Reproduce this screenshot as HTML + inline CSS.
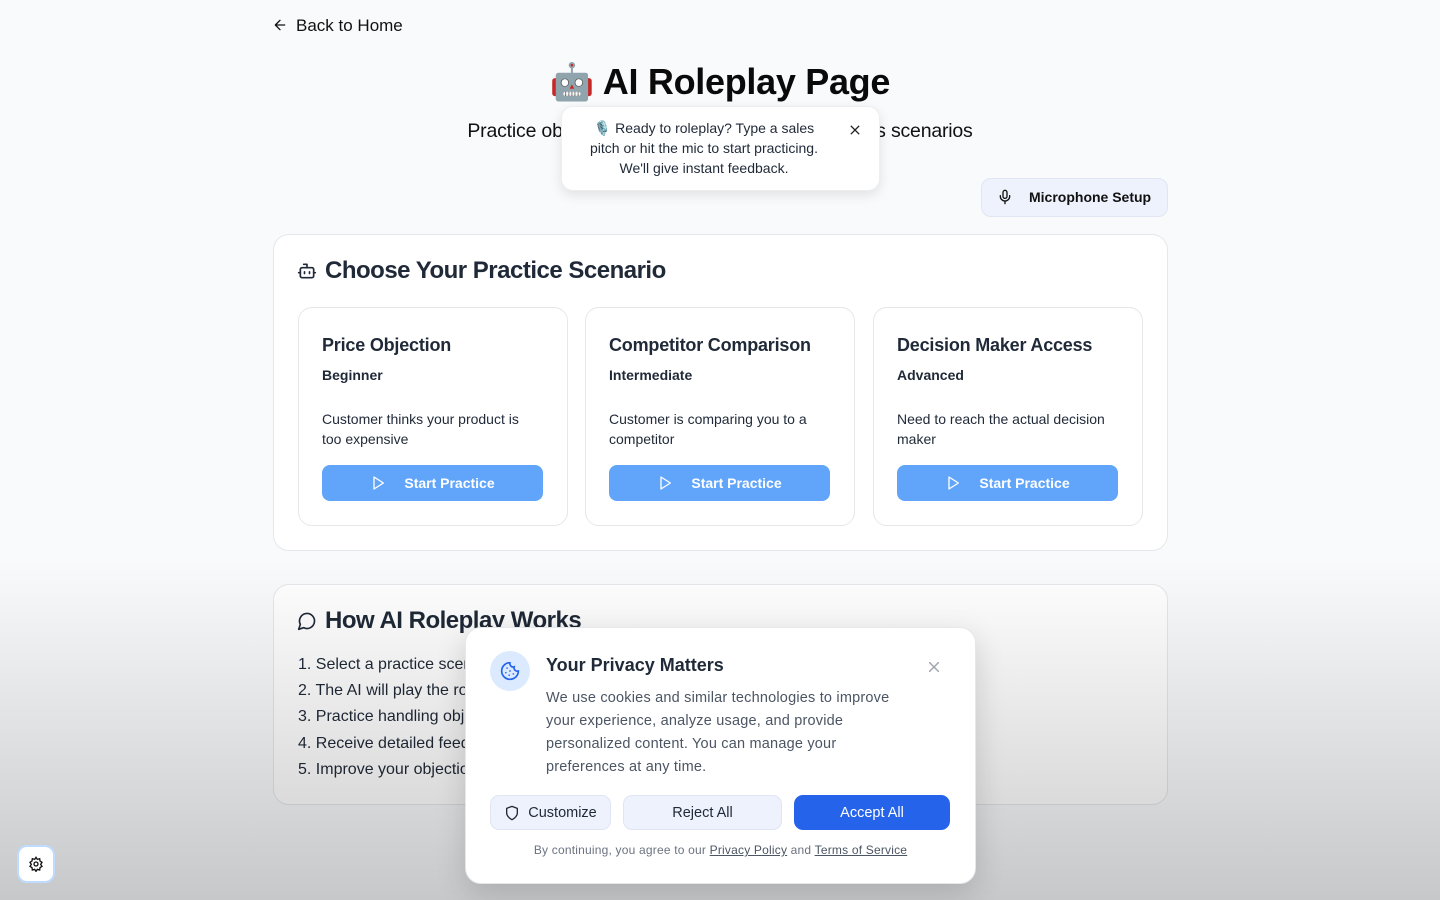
<!DOCTYPE html>
<html><head><meta charset="utf-8"><style>
*{box-sizing:border-box;margin:0;padding:0}
body{width:1440px;height:900px;overflow:hidden;background:#f8fafc;font-family:"Liberation Sans",sans-serif;color:#111827;position:relative}
.a{position:absolute}
.card{position:absolute;background:#fff;border:1px solid #e5e7eb;border-radius:16px}
.sc{position:absolute;top:307px;width:270px;height:219px;background:#fff;border:1px solid #e5e7eb;border-radius:14px}
.sc h3{position:absolute;left:23px;top:27px;font-size:18px;font-weight:bold;color:#1f2937;letter-spacing:-0.2px}
.sc .lv{position:absolute;left:23px;top:59px;font-size:14px;font-weight:bold;color:#1f2937}
.sc .d{position:absolute;left:23px;top:101px;width:215px;font-size:14px;line-height:20px;color:#1f2937}
.sc .b{position:absolute;left:23px;top:157px;width:221px;height:36px;background:#60a5fa;border-radius:8px;color:#fff;font-size:14px;font-weight:bold;display:flex;align-items:center;justify-content:center;gap:18px}
.li{position:absolute;left:298px;font-size:16px;color:#1f2937}
.btn{position:absolute;top:795px;height:35px;border-radius:9px;font-size:14.5px;display:flex;align-items:center;justify-content:center}
</style></head><body>
<svg class="a" style="left:272px;top:17px" width="16" height="16" viewBox="0 0 24 24" fill="none" stroke="#111" stroke-width="2" stroke-linecap="round" stroke-linejoin="round"><path d="M19 12H5M12 19l-7-7 7-7"/></svg>
<div class="a" style="left:296px;top:16px;font-size:17px;color:#111">Back to Home</div>
<div class="a" style="left:0;width:1440px;top:61px;text-align:center;font-size:36px;font-weight:bold;color:#0a0a0a;letter-spacing:-0.3px">🤖 AI Roleplay Page</div>
<div class="a" style="left:0;width:1440px;top:120px;text-align:center;font-size:19.5px;color:#111;letter-spacing:-0.2px">Practice objection handling with AI-powered sales scenarios</div>

<div class="a" style="left:981px;top:178px;width:187px;height:39px;background:#eef2fd;border:1px solid #dfe5f3;border-radius:10px"></div>
<svg class="a" style="left:997px;top:189px" width="16" height="16" viewBox="0 0 24 24" fill="none" stroke="#111" stroke-width="2" stroke-linecap="round"><rect x="9" y="2" width="6" height="12" rx="3"/><path d="M19 10v1a7 7 0 0 1-14 0v-1M12 18v4"/></svg>
<div class="a" style="left:1029px;top:189px;font-size:14px;font-weight:bold;color:#111">Microphone Setup</div>

<div class="card" style="left:273px;top:234px;width:895px;height:317px"></div>
<svg class="a" style="left:297px;top:261px" width="20" height="20" viewBox="0 0 24 24" fill="none" stroke="#1f2937" stroke-width="2" stroke-linecap="round" stroke-linejoin="round"><path d="M12 8V4H8"/><rect x="4" y="8" width="16" height="12" rx="2"/><path d="M2 14h2M20 14h2M15 13v2M9 13v2"/></svg>
<div class="a" style="left:325px;top:257px;font-size:24px;font-weight:bold;color:#1f2937;letter-spacing:-0.5px">Choose Your Practice Scenario</div>

<div class="sc" style="left:298px"><h3>Price Objection</h3><div class="lv">Beginner</div><div class="d">Customer thinks your product is too expensive</div><div class="b"><svg width="16" height="16" viewBox="0 0 24 24" fill="none" stroke="#fff" stroke-width="2" stroke-linejoin="round"><path d="M6 3l14 9-14 9z"/></svg>Start Practice</div></div>
<div class="sc" style="left:585px"><h3>Competitor Comparison</h3><div class="lv">Intermediate</div><div class="d">Customer is comparing you to a competitor</div><div class="b"><svg width="16" height="16" viewBox="0 0 24 24" fill="none" stroke="#fff" stroke-width="2" stroke-linejoin="round"><path d="M6 3l14 9-14 9z"/></svg>Start Practice</div></div>
<div class="sc" style="left:873px"><h3>Decision Maker Access</h3><div class="lv">Advanced</div><div class="d">Need to reach the actual decision maker</div><div class="b"><svg width="16" height="16" viewBox="0 0 24 24" fill="none" stroke="#fff" stroke-width="2" stroke-linejoin="round"><path d="M6 3l14 9-14 9z"/></svg>Start Practice</div></div>

<div class="card" style="left:273px;top:584px;width:895px;height:221px"></div>
<svg class="a" style="left:297px;top:611px" width="20" height="20" viewBox="0 0 24 24" fill="none" stroke="#1f2937" stroke-width="2" stroke-linecap="round" stroke-linejoin="round"><path d="M7.9 20A9 9 0 1 0 4 16.1L2 22z"/></svg>
<div class="a" style="left:325px;top:607px;font-size:24px;font-weight:bold;color:#1f2937;letter-spacing:-0.5px">How AI Roleplay Works</div>
<div class="li" style="top:656px">1. Select a practice scenario above</div>
<div class="li" style="top:682px">2. The AI will play the role of a customer</div>
<div class="li" style="top:708px">3. Practice handling objections in real time</div>
<div class="li" style="top:735px">4. Receive detailed feedback on your responses</div>
<div class="li" style="top:761px">5. Improve your objection handling skills</div>

<div class="a" style="left:0;top:560px;width:1440px;height:340px;background:linear-gradient(to bottom,rgba(0,0,0,0),rgba(0,0,0,0.2))"></div>

<div class="a" style="left:561px;top:106px;width:319px;height:85px;background:#fff;border:1px solid #eee;border-radius:12px;box-shadow:0 4px 12px rgba(0,0,0,0.1)"></div>
<div class="a" style="left:571px;top:118px;width:266px;text-align:center;font-size:14px;line-height:20px;color:#1f2937;white-space:nowrap">🎙️ Ready to roleplay? Type a sales<br>pitch or hit the mic to start practicing.<br>We'll give instant feedback.</div>
<svg class="a" style="left:850px;top:125px" width="10" height="10" viewBox="0 0 12 12" stroke="#222" stroke-width="1.6"><path d="M1 1l10 10M11 1L1 11"/></svg>

<div class="a" style="left:17px;top:845px;width:38px;height:38px;background:#fff;border:2px solid #bfdbfe;border-radius:10px"></div>
<svg class="a" style="left:28px;top:856px" width="16" height="16" viewBox="0 0 24 24" fill="none" stroke="#111" stroke-width="2"><circle cx="12" cy="12" r="3"/><path d="M12 2l2 3 3.5-1 .5 3.5 3 2-2 3 2 3-3 2-.5 3.5-3.5-1-2 3-2-3-3.5 1-.5-3.5-3-2 2-3-2-3 3-2L6.5 4 10 5z"/></svg>

<div class="a" style="left:465px;top:627px;width:511px;height:257px;background:#fff;border:1px solid #e5e7eb;border-radius:16px;box-shadow:0 10px 30px rgba(0,0,0,0.15)"></div>
<div class="a" style="left:490px;top:651px;width:40px;height:40px;border-radius:50%;background:#dbeafe"></div>
<svg class="a" style="left:500px;top:661px" width="20" height="20" viewBox="0 0 24 24" fill="none" stroke="#2563eb" stroke-width="2" stroke-linecap="round"><path d="M12 2a10 10 0 1 0 10 10 4 4 0 0 1-5-5 4 4 0 0 1-5-5"/><path d="M8.5 8.5h.01M16 15.5h.01M12 12h.01M11 17h.01M7 14h.01"/></svg>
<div class="a" style="left:546px;top:655px;font-size:18px;font-weight:bold;color:#1f2937">Your Privacy Matters</div>
<svg class="a" style="left:929px;top:662px" width="10" height="10" viewBox="0 0 10 10" stroke="#9ca3af" stroke-width="1.4"><path d="M0 0l10 10M10 0L0 10"/></svg>
<div class="a" style="left:546px;top:687px;width:360px;font-size:14.5px;line-height:23px;color:#4b5563;letter-spacing:0.2px">We use cookies and similar technologies to improve your experience, analyze usage, and provide personalized content. You can manage your preferences at any time.</div>
<div class="btn" style="left:490px;width:121px;background:#eef2fd;border:1px solid #dfe5f3;color:#1f2937;gap:8px"><svg width="16" height="16" viewBox="0 0 24 24" fill="none" stroke="#1f2937" stroke-width="2" stroke-linejoin="round"><path d="M12 22s8-4 8-10V5l-8-3-8 3v7c0 6 8 10 8 10z"/></svg>Customize</div>
<div class="btn" style="left:623px;width:159px;background:#eef2fd;border:1px solid #dfe5f3;color:#1f2937">Reject All</div>
<div class="btn" style="left:794px;width:156px;background:#2563eb;color:#fff">Accept All</div>
<div class="a" style="left:465px;width:511px;top:843px;text-align:center;font-size:12px;color:#6b7280;letter-spacing:0.2px">By continuing, you agree to our <u style="color:#4b5563">Privacy Policy</u> and <u style="color:#4b5563">Terms of Service</u></div>
</body></html>
